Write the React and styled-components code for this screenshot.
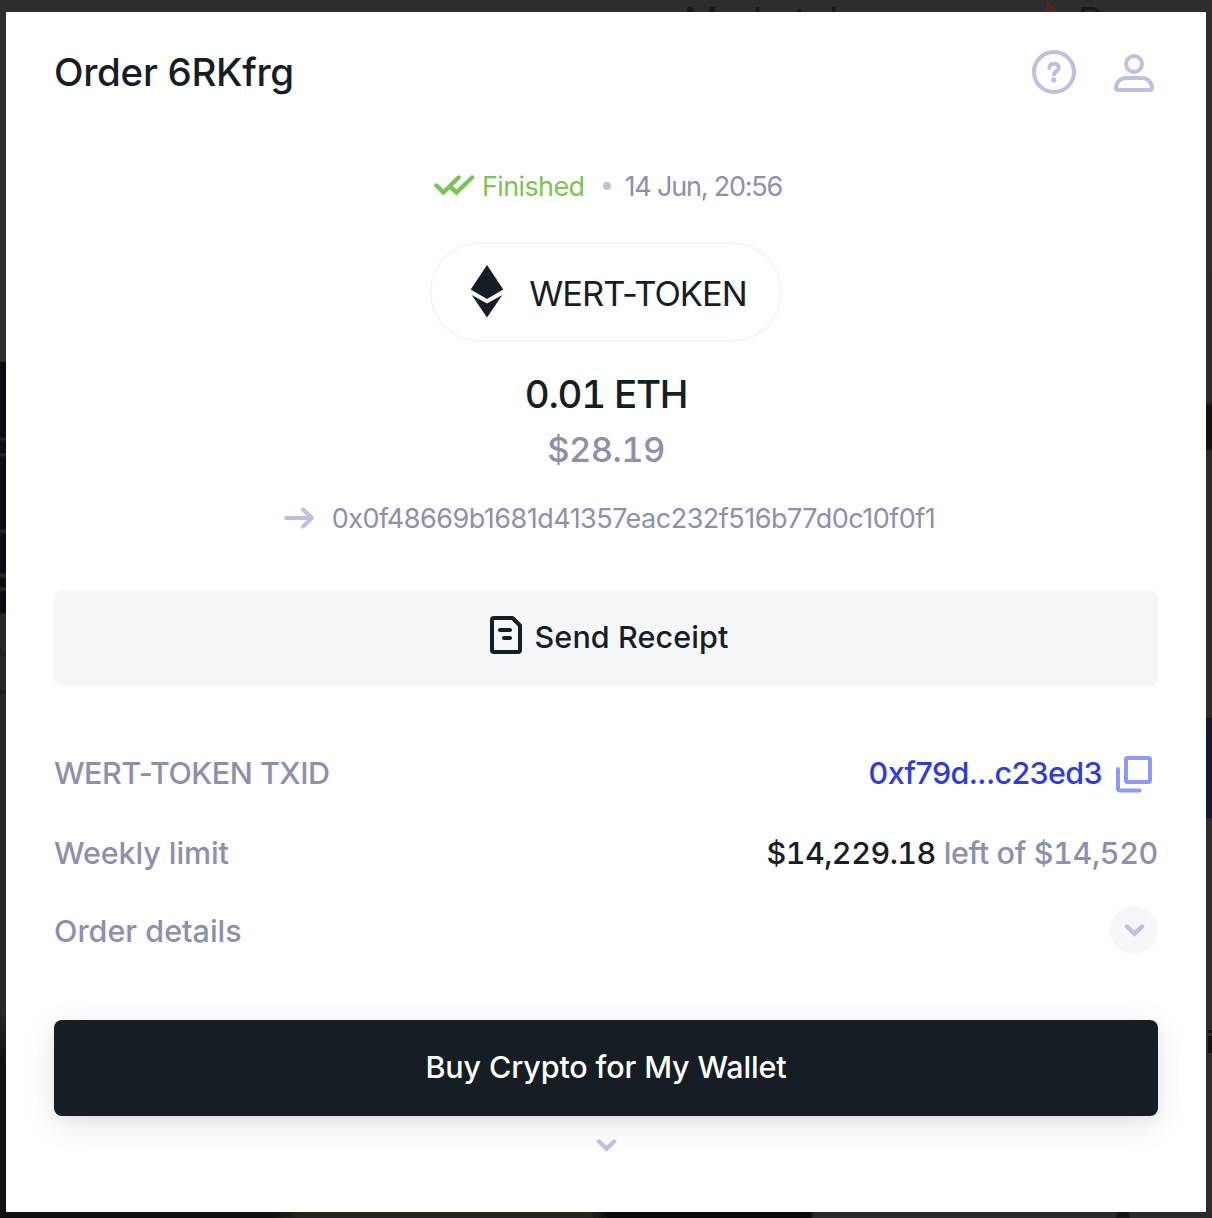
import React from "react";
import styled, { createGlobalStyle } from "styled-components";

const Global = createGlobalStyle`
  *{box-sizing:border-box}
  body{margin:0;font-family:Inter,"Liberation Sans",sans-serif;background:#2d2d2d;-webkit-font-smoothing:antialiased}
  button{font:inherit;border:0;margin:0}
`;
const Page = styled.main`
  width:1212px;height:1218px;overflow:hidden;display:grid;
  grid-template:12px 1200px 6px / 6px 1200px 6px;background:#2d2d2d;
`;
const TopEdge = styled.header`
  grid-column:1 / -1;height:12px;overflow:hidden;display:flex;align-items:flex-start;
  padding-left:684px;color:#17181b;background:#2d2d2d;font-size:38px;line-height:42px;
`;
const NavWord = styled.span`letter-spacing:${p => p.$ls || 0}px;width:${p => p.$w}px;white-space:nowrap;`;
const Flame = styled.svg`width:22px;height:34px;margin:1px 20px 0 0;flex:none;`;
const LeftEdge = styled.div`
  background:linear-gradient(#2d2d2d 350px,#0b0d10 350px 425px,#292b2c 427px,#0b0d10 430px 440px,#292b2c 443px,#0b0d10 446px 516px,#242627 519px,#0b0d10 523px 560px,#2a2c2d 563px,#0b0d10 567px 574px,#2a2c2d 577px,#0b0d10 580px 600px,#282828 602px 640px,#1c1c1c 642px,#282828 645px 678px,#1c1c1c 680px,#282828 683px 1000px,#111 1050px);
`;
const RightEdge = styled.div`
  background:linear-gradient(#2d2d2d 200px,#2b2b28 390px,#12120d 394px 436px,#2b2b28 440px 706px,#15162f 706px 806px,#2d2d2b 806px);
  padding-top:1018px;overflow:hidden;
`;
const Sliver = styled.i`display:block;width:4px;height:${p => p.$h}px;margin:0 0 3px 2px;background:#111;`;
const BottomEdge = styled.footer`
  grid-column:1 / -1;background:linear-gradient(90deg,#10110e,#10110e 270px,#25241f 300px 590px,#090a08 610px 810px,#292c2a 814px 1115px,#121512 1118px 1128px,#292c2a 1131px);
`;
const Card = styled.section`background:#fff;padding:38px 48px 0;display:flex;flex-direction:column;`;
const Header = styled.div`height:44px;display:flex;align-items:center;justify-content:space-between;`;
const Title = styled.h1`margin:0;font-size:38.5px;line-height:44px;font-weight:500;letter-spacing:${p => p.$ls}px;color:#171d25;white-space:nowrap;`;
const Actions = styled.div`display:flex;gap:34px;`;
const Icon = styled.svg`display:block;flex:none;width:${p => p.$w}px;height:${p => p.$h || p.$w}px;fill:none;stroke:${p => p.$c || "#bdc0de"};stroke-width:${p => p.$sw || 4};stroke-linecap:round;stroke-linejoin:${p => p.$join || "round"};`;
const Center = styled.div`display:flex;align-items:center;justify-content:center;`;
const Status = styled(Center)`height:40px;margin-top:72px;padding-left:4px;font-size:27px;color:#8e8fad;`;
const Dot = styled.i`width:8px;height:8px;border-radius:50%;background:#bdc0de;margin:0 14px 0 18px;`;
const Label = styled.span`letter-spacing:${p => p.$ls}px;white-space:pre;padding-top:${p => p.$down || 0}px;`;
const Done = styled(Label)`margin-left:8px;color:#7fc254;`;
const Figure = styled(Label)`font-variant-numeric:tabular-nums;color:${p => (p.$dark ? "#171d25" : "inherit")};`;
const Token = styled(Center)`
  align-self:center;width:352px;height:100px;margin-top:36px;border:2px solid #f6f6f7;border-radius:50px;
  gap:25px;padding-left:5px;font-size:34.5px;color:#171d25;
`;
const Amount = styled(Center)`margin-top:27px;height:50px;font-size:38.5px;font-weight:500;color:#171d25;`;
const Fiat = styled(Amount)`margin-top:8px;height:44px;font-size:34.5px;color:#8e8fad;`;
const Address = styled(Center)`height:40px;margin-top:27px;padding-left:6px;gap:17px;font-size:27px;color:#8e8fad;`;
const Button = styled.button`
  height:96px;flex:none;border-radius:8px;display:flex;align-items:center;justify-content:center;gap:13px;padding:0 0 3px;
  font-size:30.5px;font-weight:500;color:#fff;background:#171d25;
  box-shadow:0 8px 32px rgba(0,0,0,.1),0 4px 12px rgba(0,0,0,.05);
`;
const SendButton = styled(Button)`margin-top:52px;padding:0 0 6px 6px;color:#171d25;background:#f5f6f8;box-shadow:none;`;
const Rows = styled.dl`margin:46px 0 52px;`;
const Row = styled.div`height:${p => p.$h}px;display:flex;align-items:center;justify-content:space-between;font-size:30.5px;font-weight:500;color:#8e8fad;`;
const Term = styled.dt`letter-spacing:${p => p.$ls}px;`;
const Value = styled.dd`margin:0;display:flex;align-items:center;padding-right:${p => p.$pr || 0}px;gap:${p => p.$gap || 0}px;`;
const Hash = styled(Label)`color:#2d3bdf;`;
const CopyIcon = styled(Icon)`margin-top:5px;`;
const Toggle = styled(Center)`width:48px;height:48px;border-radius:50%;background:#f5f6f8;`;
const More = styled(Center)`height:20px;margin-top:19px;`;

const Chevron = () => <Icon $w={22} $h={16} $sw={4.4} $join="miter" viewBox="0 0 22 16"><path d="M4 4.500 11.500 11.700 19 4.500" /></Icon>;

export default function App() {
  return (
    <Page>
      <Global />
      <TopEdge>
        <NavWord $w={352} $ls={-0.5}>Marketplace</NavWord>
        <Flame viewBox="0 0 22 34"><path d="M10 0C20 5 22 13 22 23c0 14-22 14-22 0 0-6 4-11 8-13 3-3 3-7 2-10Z" fill="#56281e" /></Flame>
        <NavWord $w={110}>Drops</NavWord>
      </TopEdge>
      <LeftEdge />
      <Card>
        <Header>
          <Title $ls={-0.3}>Order 6RKfrg</Title>
          <Actions>
            <Icon $w={44} viewBox="0 0 44 44"><circle cx="22" cy="22" r="20" /><path d="M17.400 17.800C17.400 12.400 26.800 12.400 26.800 17.800C26.800 21 22 21.400 22 24.500" strokeWidth="4.200" /><circle cx="21.700" cy="29.900" r="2.600" fill="#bdc0de" stroke="none" /></Icon>
            <Icon $w={48} $h={44} viewBox="0 0 48 44"><circle cx="24" cy="14" r="8" /><path d="M6 38C6 32.500 10.500 28 16 28H32C37.500 28 42 32.500 42 38Q42 40 40 40H8Q6 40 6 38Z" /></Icon>
          </Actions>
        </Header>
        <Status>
          <Icon $w={40} $h={22} $sw={4.4} $c="#7fc254" $join="miter" viewBox="0 0 40 22"><path d="M2.500 10.500 9.500 17.500 24.500 2.500M17.500 13 22.500 17.500 38 2.500" /></Icon>
          <Done $ls={-0.6} $down={1}>Finished</Done><Dot /><Label $ls={-1.2} $down={1}>14 Jun, 20:56</Label>
        </Status>
        <Token>
          <Icon $w={34} $h={54} viewBox="0 0 34 54"><path d="M17 0 33.300 24.500 17 34 .7 24.500ZM1.700 30 17 38.500 32.300 30 17 52.500Z" fill="#171d25" stroke="none" /></Icon>
          <Label $ls={-1} $down={2}>WERT-TOKEN</Label>
        </Token>
        <Amount><Figure $ls={-1.25}>0.01 ETH</Figure></Amount>
        <Fiat><Figure $ls={-0.6}>$28.19</Figure></Fiat>
        <Address>
          <Icon $w={32} $h={24} $sw={4} viewBox="0 0 32 24"><path d="M3 12H29M20 3.500 29 12 20 20.500" /></Icon>
          <Label $ls={-0.5}>0x0f48669b1681d41357eac232f516b77d0c10f0f1</Label>
        </Address>
        <SendButton>
          <Icon $w={32} $h={38} $c="#171d25" viewBox="0 0 32 38"><path d="M4 2H22.500L30 9.500V34Q30 36 28 36H4Q2 36 2 34V4Q2 2 4 2ZM10 14H20M14 22H20" /></Icon>
          <Label $ls={0.1} $down={2}>Send Receipt</Label>
        </SendButton>
        <Rows>
          <Row $h={80}><Term $ls={-0.5}>WERT-TOKEN TXID</Term><Value $pr={6} $gap={13}><Hash $ls={-0.65}>0xf79d...c23ed3</Hash>
            <CopyIcon $w={37} $c="#8e97ff" viewBox="0 0 37 37"><rect x="11" y="2" width="24" height="24" rx="1.500" /><path d="M3 13V32Q3 34.500 5.500 34.500H24.500" /></CopyIcon></Value></Row>
          <Row $h={80}><Term $ls={-0.1}>Weekly limit</Term><Value><Figure $dark $ls={-0.5}>$14,229.18</Figure><Figure $ls={-0.35}> left of $14,520</Figure></Value></Row>
          <Row $h={76}><Term $ls={0}>Order details</Term><Value><Toggle><Chevron /></Toggle></Value></Row>
        </Rows>
        <Button><Label $ls={-0.14}>Buy Crypto for My Wallet</Label></Button>
        <More><Chevron /></More>
      </Card>
      <RightEdge><Sliver $h={3} /><Sliver $h={17} /></RightEdge>
      <BottomEdge />
    </Page>
  );
}
